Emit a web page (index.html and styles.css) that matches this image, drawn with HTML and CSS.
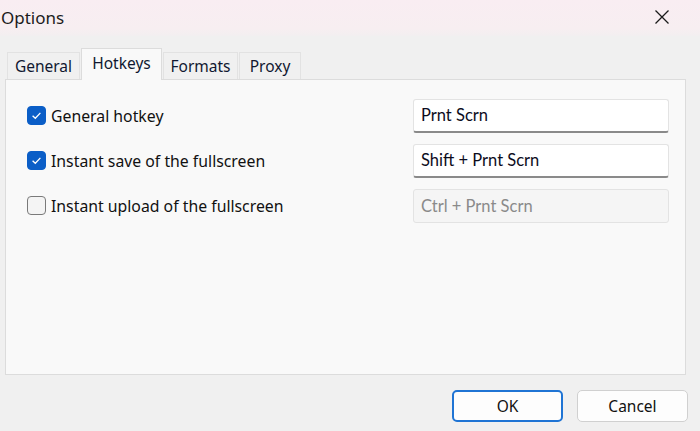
FILE: index.html
```html
<!DOCTYPE html>
<html>
<head>
<meta charset="utf-8">
<link rel="stylesheet" href="styles.css">
</head>
<body>
<div class="window">
  <div class="titlebar">
    <span class="title">Options</span>
    <svg class="close" width="16" height="16" viewBox="0 0 16 16"><path d="M1.5 1.5L14.5 14.5M14.5 1.5L1.5 14.5" stroke="#1a1a1a" stroke-width="1.3" fill="none"/></svg>
  </div>
  <div class="content">
    <div class="tabs">
      <div class="tab t-general">General</div>
      <div class="tab active t-hotkeys">Hotkeys</div>
      <div class="tab t-formats">Formats</div>
      <div class="tab t-proxy">Proxy</div>
    </div>
    <div class="panel">
      <div class="row">
        <label class="check"><span class="box on"><svg width="13" height="13" viewBox="0 0 12 12"><path d="M2.4 6.2L4.9 8.6L9.6 3.6" stroke="#fff" stroke-width="1.2" fill="none"/></svg></span>General hotkey</label>
        <div class="field">Prnt Scrn</div>
      </div>
      <div class="row">
        <label class="check"><span class="box on"><svg width="13" height="13" viewBox="0 0 12 12"><path d="M2.4 6.2L4.9 8.6L9.6 3.6" stroke="#fff" stroke-width="1.2" fill="none"/></svg></span>Instant save of the fullscreen</label>
        <div class="field">Shift + Prnt Scrn</div>
      </div>
      <div class="row">
        <label class="check"><span class="box"></span>Instant upload of the fullscreen</label>
        <div class="field disabled">Ctrl + Prnt Scrn</div>
      </div>
    </div>
    <div class="buttons">
      <div class="btn default">OK</div>
      <div class="btn">Cancel</div>
    </div>
  </div>
</div>
</body>
</html>
```

FILE: styles.css
```css
html, body {
  margin: 0;
  padding: 0;
  background: #f0f0f0;
}
.window {
  width: 700px;
  height: 431px;
  display: flex;
  flex-direction: column;
  font-family: "Noto Sans", "Open Sans", sans-serif;
  color: #1a1a1a;
  overflow: hidden;
}
.titlebar {
  height: 36px;
  flex: none;
  display: flex;
  align-items: center;
  justify-content: space-between;
  padding: 0 30px 0 1px;
  background: linear-gradient(180deg, #f9edf2 0%, #f7eef1 80%, #f2eff0 100%);
}
.title {
  font-size: 17px;
  color: #1c1c1c;
  margin-top: -1px;
}
.close {
  margin-top: -2px;
}
.content {
  padding: 0 14px 0 5px;
  display: flex;
  flex-direction: column;
}
.tabs {
  display: flex;
  align-items: flex-end;
  height: 43px;
  padding-left: 2px;
  position: relative;
  z-index: 1;
}
.tab {
  height: 27px;
  display: flex;
  align-items: center;
  justify-content: center;
  font-size: 15.5px;
  color: #101830;
  background: #f0f0f0;
  border: 1px solid #e2e2e2;
  border-bottom: none;
  box-sizing: border-box;
  margin-right: 1px;
}
.t-general { width: 73px; }
.t-hotkeys { width: 81px; }
.t-formats { width: 75px; }
.t-proxy { width: 62px; }
.tab.active {
  height: 32px;
  background: #f9f9f9;
  border-color: #dcdcdc;
  margin-bottom: -1px;
  padding-bottom: 4px;
}
.panel {
  height: 296px;
  box-sizing: border-box;
  border: 1px solid #dcdcdc;
  background: #f9f9f9;
  padding: 19px 16px 0 21px;
  display: flex;
  flex-direction: column;
  gap: 12px;
}
.row {
  display: flex;
  align-items: center;
  justify-content: space-between;
  height: 33px;
}
.check {
  display: flex;
  align-items: center;
  gap: 5px;
  font-size: 15.8px;
  color: #111;
}
.box {
  width: 19px;
  height: 19px;
  box-sizing: border-box;
  border-radius: 4px;
  border: 1px solid #7a7a7a;
  background: #f4f4f4;
  display: flex;
  align-items: center;
  justify-content: center;
}
.box.on {
  background: #0b5ec7;
  border-color: #0b5ec7;
}
.field {
  width: 256px;
  height: 34px;
  box-sizing: border-box;
  background: #ffffff;
  border: 1px solid #e3e3e3;
  border-bottom: 2px solid #8a8a8a;
  border-radius: 3px;
  padding: 0 0 0 7px;
  display: flex;
  align-items: center;
  font-family: "Lato", "Noto Sans", sans-serif;
  font-size: 16.5px;
  color: #0c0c1c;
}
.field.disabled {
  background: #f5f5f5;
  border-bottom: 1px solid #e3e3e3;
  color: #8a8a8a;
}
.buttons {
  display: flex;
  justify-content: flex-end;
  gap: 14px;
  margin-top: 15px;
  margin-right: -2px;
}
.btn {
  width: 111px;
  height: 32px;
  box-sizing: border-box;
  border: 1px solid #d0d0d0;
  border-radius: 5px;
  background: #fdfdfd;
  display: flex;
  align-items: center;
  justify-content: center;
  font-size: 15.5px;
  color: #111;
}
.btn.default {
  border: 2px solid #1f74d4;
}
```
